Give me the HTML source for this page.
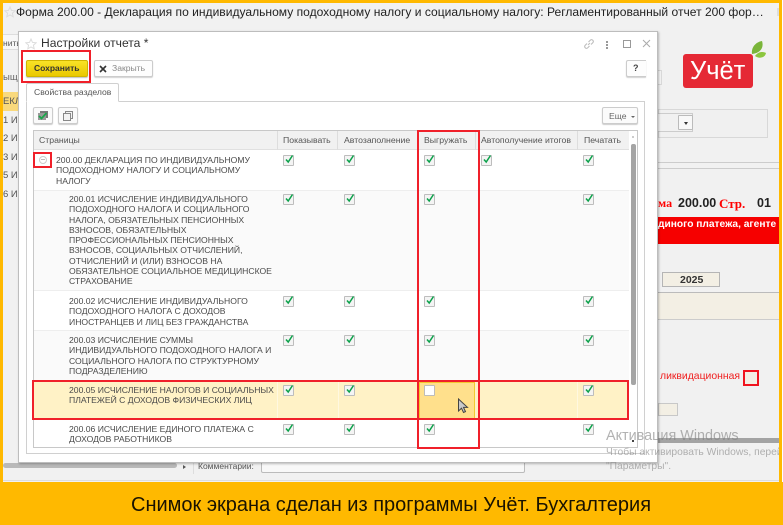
<!DOCTYPE html>
<html><head><meta charset="utf-8">
<style>
html,body{margin:0;padding:0}
body{width:783px;height:525px;position:relative;overflow:hidden;background:#f1f1f1;font-family:"Liberation Sans",sans-serif;color:#444}
.t{position:absolute;white-space:nowrap}
#wrap div,#wrap svg{position:absolute}
#wrap{position:absolute;left:0;top:0;width:783px;height:525px;overflow:hidden;filter:blur(.35px)}
.cell{font-size:8.62px;line-height:10.3px;color:#4a4a4a;white-space:nowrap}
.hd{font-size:8.7px;color:#555;white-space:nowrap;top:135px}
.cb{width:9px;height:9px;background:#f4f4f4;border:1px solid #bdbdbd;border-radius:1px}
.cb svg{left:0;top:-3px;overflow:visible}
.rb{border:2px solid #f0202a;box-sizing:border-box}
</style></head><body>
<div id="wrap">
<!-- window title -->
<svg width="12" height="12" style="left:4px;top:6px" viewBox="0 0 12 12"><path d="M6 1l1.500 3.400 3.700.4-2.800 2.400.8 3.600L6 9l-3.200 1.800.8-3.600L.8 4.800l3.700-.4z" fill="none" stroke="#ddd"/></svg>
<div class="t" style="left:16px;top:4px;font-size:12.07px;line-height:16px;color:#222">Форма 200.00 - Декларация по индивидуальному подоходному налогу и социальному налогу: Регламентированный отчет 200 фор…</div>
<div style="left:777px;top:8px;width:2px;height:8px;background:#ddd"></div>

<!-- background left -->
<div style="left:3px;top:34px;width:15px;height:14px;background:#f7f7f7;border:1px solid #ddd;border-left:0"></div>
<div class="t" style="left:3px;top:38px;font-size:8.5px;color:#555">нить</div>
<div style="left:3px;top:92px;width:15px;height:19px;background:#f9d97c"></div>
<div class="t" style="left:3px;top:72px;font-size:9.500px;color:#666">ыщи</div>
<div class="t" style="left:3px;top:96px;font-size:9.500px;color:#555">ЕКЛ</div>
<div class="t" style="left:3px;top:115px;font-size:9.500px;color:#555">1 ИС</div>
<div class="t" style="left:3px;top:133px;font-size:9.500px;color:#555">2 ИС</div>
<div class="t" style="left:3px;top:152px;font-size:9.500px;color:#555">3 ИС</div>
<div class="t" style="left:3px;top:170px;font-size:9.500px;color:#555">5 ИС</div>
<div class="t" style="left:3px;top:189px;font-size:9.500px;color:#555">6 ИС</div>
<div style="left:3px;top:463px;width:174px;height:5px;background:#b9b9b9;border-radius:3px"></div>
<div style="left:183px;top:465px;width:0;height:0;border:2px solid transparent;border-left:3px solid #555"></div>
<div style="left:193px;top:462px;width:1px;height:12px;background:#ddd"></div>
<div style="left:3px;top:480px;width:776px;height:1px;background:#ddd"></div>
<div class="t" style="left:198px;top:461px;font-size:8.5px;color:#555">Комментарии:</div>
<div style="left:261px;top:460px;width:264px;height:13px;background:#f8f8f8;border:1px solid #bbb;border-radius:2px;box-sizing:border-box"></div>

<!-- background right -->
<div style="left:658px;top:70px;width:4px;height:15px;background:#f4f4f4;border:1px solid #d8d8d8;border-left:0;box-sizing:border-box"></div>
<div style="left:658px;top:109px;width:110px;height:29px;border:1px solid #d8d8d8;background:#f0f0f0;box-sizing:border-box"></div>
<div style="left:658px;top:113px;width:35px;height:19px;background:#f1f1f1;border:1px solid #ccc;border-left:0;box-sizing:border-box"></div>
<div style="left:678px;top:115px;width:15px;height:15px;background:#f8f8f8;border:1px solid #bbb;border-radius:1px;box-sizing:border-box"></div>
<div style="left:684px;top:122px;width:0;height:0;border:2.500px solid transparent;border-top:3px solid #333"></div>
<div style="left:658px;top:162px;width:121px;height:1px;background:#ccc"></div>
<div style="left:658px;top:168px;width:121px;height:1px;background:#ccc"></div>
<div class="t" style="left:658px;top:196px;font:bold 12px 'Liberation Serif',serif;color:#f00">ма</div>
<div class="t" style="left:678px;top:196px;font:bold 12.500px 'Liberation Sans',sans-serif;color:#222">200.00</div>
<div class="t" style="left:719px;top:196px;font:bold 13px 'Liberation Serif',serif;color:#f00">Стр.</div>
<div class="t" style="left:757px;top:196px;font:bold 12.500px 'Liberation Sans',sans-serif;color:#222">01</div>
<div style="left:658px;top:217px;width:121px;height:27px;background:#f60000"></div>
<div class="t" style="left:658px;top:219px;font:bold 10.200px 'Liberation Sans',sans-serif;color:#fff">диного платежа, агенте</div>
<div style="left:662px;top:272px;width:58px;height:15px;background:#f3efe4;border:1px solid #b5b5b5;box-sizing:border-box"></div>
<div class="t" style="left:680px;top:274px;font:bold 10.500px 'Liberation Sans',sans-serif;color:#333">2025</div>
<div style="left:658px;top:292px;width:121px;height:28px;background:#f3efe4;border-top:1px solid #bbb;border-bottom:1px solid #ccc;box-sizing:border-box"></div>
<div class="t" style="left:660px;top:371px;font-size:10.400px;color:#f02020">ликвидационная</div>
<div style="left:743px;top:370px;width:16px;height:16px;background:#f3efe4;border:2px solid #f0141e;box-sizing:border-box"></div>
<div style="left:658px;top:403px;width:20px;height:13px;background:#f3efe4;border:1px solid #c8c8c8;box-sizing:border-box"></div>
<div style="left:658px;top:438px;width:121px;height:5px;background:#a3a3a3"></div>

<!-- dialog -->
<div style="left:18px;top:31px;width:640px;height:432px;background:#fff;border:1px solid #bdbdbd;box-sizing:border-box;box-shadow:1px 1px 2px rgba(0,0,0,.25)"></div>
<svg width="12" height="12" style="left:25px;top:38px" viewBox="0 0 12 12"><path d="M6 1l1.500 3.400 3.700.4-2.800 2.400.8 3.600L6 9l-3.200 1.800.8-3.600L.8 4.800l3.700-.4z" fill="none" stroke="#ddd"/></svg>
<div class="t" style="left:41px;top:35px;font-size:12.100px;line-height:16px;color:#333">Настройки отчета *</div>
<!-- dialog icons -->
<svg width="12" height="12" style="left:583px;top:38px" viewBox="0 0 12 12"><path d="M5 7l2-2M4 5.500L2 7.500a1.800 1.800 0 0 0 2.500 2.500L6.500 8M8 6.500l2-2A1.800 1.800 0 0 0 7.500 2L5.500 4" fill="none" stroke="#bbb"/></svg>
<div style="left:606px;top:41px;width:2px;height:2px;background:#999;box-shadow:0 3px #999,0 6px #999"></div>
<div style="left:623px;top:40px;width:6px;height:6px;border:1px solid #999"></div>
<svg width="9" height="9" style="left:642px;top:39px" viewBox="0 0 9 9"><path d="M1 1l7 7M8 1L1 8" stroke="#aaa" fill="none"/></svg>

<!-- buttons -->
<div style="left:26px;top:60px;width:62px;height:17px;border-radius:2px;background:linear-gradient(#f8e227,#e9c800);border:1px solid #cfb400;box-sizing:border-box;box-shadow:0 1px 1px rgba(0,0,0,.25)"></div>
<div class="t" style="left:34px;top:63px;font:bold 8.500px/11px 'Liberation Sans',sans-serif;color:#333">Сохранить</div>
<div style="left:94px;top:60px;width:59px;height:17px;background:#fdfdfd;border:1px solid #ccc;border-radius:2px;box-sizing:border-box;box-shadow:0 1px 1px rgba(0,0,0,.18)"></div>
<svg width="8" height="8" style="left:99px;top:65px" viewBox="0 0 8 8"><path d="M1 1l6 6M7 1L1 7" stroke="#333" stroke-width="1.600" fill="none"/></svg>
<div class="t" style="left:112px;top:63px;font-size:8.600px;line-height:11px;color:#888">Закрыть</div>
<div class="rb" style="left:21px;top:50px;width:70px;height:33px"></div>
<div style="left:626px;top:60px;width:20px;height:17px;background:#fdfdfd;border:1px solid #ccc;border-right:0;border-radius:2px 0 0 2px;box-sizing:border-box;box-shadow:0 1px 1px rgba(0,0,0,.18)"></div>
<div class="t" style="left:633px;top:63px;font:bold 9px/11px 'Liberation Sans',sans-serif;color:#444">?</div>

<!-- tab + panel -->
<div style="left:26px;top:101px;width:619px;height:353px;border:1px solid #d0d0d0;box-sizing:border-box;background:#fff"></div>
<div style="left:26px;top:83px;width:93px;height:19px;background:#fff;border:1px solid #d0d0d0;border-bottom:1px solid #fff;box-sizing:border-box;border-radius:2px 2px 0 0"></div>
<div class="t" style="left:34px;top:87px;font-size:8.600px;line-height:11px;color:#555">Свойства разделов</div>

<div style="left:33px;top:107px;width:20px;height:17px;background:#fafafa;border:1px solid #ccc;border-radius:2px;box-sizing:border-box;box-shadow:0 1px 1px rgba(0,0,0,.2)"></div>
<svg width="12" height="12" style="left:37px;top:110px" viewBox="0 0 12 12"><rect x="3" y="1" width="8" height="7" fill="#777"/><rect x="1" y="3" width="8" height="7" fill="#9a9a9a"/><path d="M2 6l2.500 2.500L9.500 3" stroke="#1aa64a" stroke-width="1.800" fill="none"/></svg>
<div style="left:58px;top:107px;width:20px;height:17px;background:#fafafa;border:1px solid #ccc;border-radius:2px;box-sizing:border-box;box-shadow:0 1px 1px rgba(0,0,0,.2)"></div>
<svg width="12" height="12" style="left:62px;top:110px" viewBox="0 0 12 12"><rect x="3.500" y="1.500" width="7" height="7" fill="#f3f3f3" stroke="#888"/><rect x="1.500" y="3.500" width="7" height="7" fill="#f3f3f3" stroke="#888"/></svg>
<div style="left:602px;top:107px;width:36px;height:17px;background:#fbfbfb;border:1px solid #ccc;border-radius:2px;box-sizing:border-box;box-shadow:0 1px 1px rgba(0,0,0,.2)"></div>
<div class="t" style="left:609px;top:111px;font-size:8.600px;line-height:11px;color:#666">Еще</div>
<div style="left:631px;top:116px;width:0;height:0;border:2px solid transparent;border-top:2.500px solid #666"></div>

<!-- table -->
<div style="left:33px;top:130px;width:605px;height:318px;border:1px solid #c8c8c8;box-sizing:border-box;background:#fff"></div>
<div style="left:34px;top:131px;width:595px;height:19px;background:#f1f1f1;border-bottom:1px solid #e0e0e0;box-sizing:border-box"></div>
<div style="left:277px;top:131px;width:1px;height:19px;background:#ddd"></div>
<div style="left:337px;top:131px;width:1px;height:19px;background:#ddd"></div>
<div style="left:475px;top:131px;width:1px;height:19px;background:#ddd"></div>
<div style="left:577px;top:131px;width:1px;height:19px;background:#ddd"></div>
<div class="hd t" style="left:39px">Страницы</div>
<div class="hd t" style="left:283px">Показывать</div>
<div class="hd t" style="left:344px">Автозаполнение</div>
<div class="hd t" style="left:424px">Выгружать</div>
<div class="hd t" style="left:481px">Автополучение итогов</div>
<div class="hd t" style="left:584px">Печатать</div>

<!-- row backgrounds -->
<div style="left:34px;top:190px;width:595px;height:101px;background:#fafafa;border-top:1px solid #eee;border-bottom:1px solid #eee;box-sizing:border-box"></div>
<div style="left:34px;top:330px;width:595px;height:51px;background:#fafafa;border-top:1px solid #eee;box-sizing:border-box"></div>
<div style="left:34px;top:381px;width:595px;height:38px;background:#fff2c6"></div>
<div style="left:277px;top:381px;width:1px;height:38px;background:#fff8e0"></div>
<div style="left:338px;top:381px;width:1px;height:38px;background:#fff8e0"></div>
<div style="left:577px;top:381px;width:1px;height:38px;background:#fff8e0"></div>
<div style="left:419px;top:382px;width:56px;height:37px;background:#ffe08c;border:1px solid #f3c92f;box-sizing:border-box"></div>

<div style="left:39px;top:156px;width:6px;height:6px;border:1px solid #ccc;border-radius:50%"></div>
<div style="left:41px;top:159px;width:4px;height:1px;background:#bbb"></div>
<div class="rb" style="left:33px;top:152px;width:19px;height:16px"></div>

<div class="cell" style="left:56px;top:155px">200.00 ДЕКЛАРАЦИЯ ПО ИНДИВИДУАЛЬНОМУ<br>ПОДОХОДНОМУ НАЛОГУ И СОЦИАЛЬНОМУ<br>НАЛОГУ</div>
<div class="cell" style="left:69px;top:194px">200.01 ИСЧИСЛЕНИЕ ИНДИВИДУАЛЬНОГО<br>ПОДОХОДНОГО НАЛОГА И СОЦИАЛЬНОГО<br>НАЛОГА, ОБЯЗАТЕЛЬНЫХ ПЕНСИОННЫХ<br>ВЗНОСОВ, ОБЯЗАТЕЛЬНЫХ<br>ПРОФЕССИОНАЛЬНЫХ ПЕНСИОННЫХ<br>ВЗНОСОВ, СОЦИАЛЬНЫХ ОТЧИСЛЕНИЙ,<br>ОТЧИСЛЕНИЙ И (ИЛИ) ВЗНОСОВ НА<br>ОБЯЗАТЕЛЬНОЕ СОЦИАЛЬНОЕ МЕДИЦИНСКОЕ<br>СТРАХОВАНИЕ</div>
<div class="cell" style="left:69px;top:296px">200.02 ИСЧИСЛЕНИЕ ИНДИВИДУАЛЬНОГО<br>ПОДОХОДНОГО НАЛОГА С ДОХОДОВ<br>ИНОСТРАНЦЕВ И ЛИЦ БЕЗ ГРАЖДАНСТВА</div>
<div class="cell" style="left:69px;top:335px">200.03 ИСЧИСЛЕНИЕ СУММЫ<br>ИНДИВИДУАЛЬНОГО ПОДОХОДНОГО НАЛОГА И<br>СОЦИАЛЬНОГО НАЛОГА ПО СТРУКТУРНОМУ<br>ПОДРАЗДЕЛЕНИЮ</div>
<div class="cell" style="left:69px;top:385px">200.05 ИСЧИСЛЕНИЕ НАЛОГОВ И СОЦИАЛЬНЫХ<br>ПЛАТЕЖЕЙ С ДОХОДОВ ФИЗИЧЕСКИХ ЛИЦ</div>
<div class="cell" style="left:69px;top:424px">200.06 ИСЧИСЛЕНИЕ ЕДИНОГО ПЛАТЕЖА С<br>ДОХОДОВ РАБОТНИКОВ</div>

<!-- checkboxes -->
<div class="cb" style="left:283px;top:155px"><svg width="10" height="12" viewBox="0 0 10 12"><path d="M2 6.500l2.200 2.500L8.500 2.500" stroke="#0ba14a" stroke-width="1.500" fill="none"/></svg></div>
<div class="cb" style="left:344px;top:155px"><svg width="10" height="12" viewBox="0 0 10 12"><path d="M2 6.500l2.200 2.500L8.500 2.500" stroke="#0ba14a" stroke-width="1.500" fill="none"/></svg></div>
<div class="cb" style="left:424px;top:155px"><svg width="10" height="12" viewBox="0 0 10 12"><path d="M2 6.500l2.200 2.500L8.500 2.500" stroke="#0ba14a" stroke-width="1.500" fill="none"/></svg></div>
<div class="cb" style="left:481px;top:155px"><svg width="10" height="12" viewBox="0 0 10 12"><path d="M2 6.500l2.200 2.500L8.500 2.500" stroke="#0ba14a" stroke-width="1.500" fill="none"/></svg></div>
<div class="cb" style="left:583px;top:155px"><svg width="10" height="12" viewBox="0 0 10 12"><path d="M2 6.500l2.200 2.500L8.500 2.500" stroke="#0ba14a" stroke-width="1.500" fill="none"/></svg></div>

<div class="cb" style="left:283px;top:194px"><svg width="10" height="12" viewBox="0 0 10 12"><path d="M2 6.500l2.200 2.500L8.500 2.500" stroke="#0ba14a" stroke-width="1.500" fill="none"/></svg></div>
<div class="cb" style="left:344px;top:194px"><svg width="10" height="12" viewBox="0 0 10 12"><path d="M2 6.500l2.200 2.500L8.500 2.500" stroke="#0ba14a" stroke-width="1.500" fill="none"/></svg></div>
<div class="cb" style="left:424px;top:194px"><svg width="10" height="12" viewBox="0 0 10 12"><path d="M2 6.500l2.200 2.500L8.500 2.500" stroke="#0ba14a" stroke-width="1.500" fill="none"/></svg></div>
<div class="cb" style="left:583px;top:194px"><svg width="10" height="12" viewBox="0 0 10 12"><path d="M2 6.500l2.200 2.500L8.500 2.500" stroke="#0ba14a" stroke-width="1.500" fill="none"/></svg></div>

<div class="cb" style="left:283px;top:296px"><svg width="10" height="12" viewBox="0 0 10 12"><path d="M2 6.500l2.200 2.500L8.500 2.500" stroke="#0ba14a" stroke-width="1.500" fill="none"/></svg></div>
<div class="cb" style="left:344px;top:296px"><svg width="10" height="12" viewBox="0 0 10 12"><path d="M2 6.500l2.200 2.500L8.500 2.500" stroke="#0ba14a" stroke-width="1.500" fill="none"/></svg></div>
<div class="cb" style="left:424px;top:296px"><svg width="10" height="12" viewBox="0 0 10 12"><path d="M2 6.500l2.200 2.500L8.500 2.500" stroke="#0ba14a" stroke-width="1.500" fill="none"/></svg></div>
<div class="cb" style="left:583px;top:296px"><svg width="10" height="12" viewBox="0 0 10 12"><path d="M2 6.500l2.200 2.500L8.500 2.500" stroke="#0ba14a" stroke-width="1.500" fill="none"/></svg></div>

<div class="cb" style="left:283px;top:335px"><svg width="10" height="12" viewBox="0 0 10 12"><path d="M2 6.500l2.200 2.500L8.500 2.500" stroke="#0ba14a" stroke-width="1.500" fill="none"/></svg></div>
<div class="cb" style="left:344px;top:335px"><svg width="10" height="12" viewBox="0 0 10 12"><path d="M2 6.500l2.200 2.500L8.500 2.500" stroke="#0ba14a" stroke-width="1.500" fill="none"/></svg></div>
<div class="cb" style="left:424px;top:335px"><svg width="10" height="12" viewBox="0 0 10 12"><path d="M2 6.500l2.200 2.500L8.500 2.500" stroke="#0ba14a" stroke-width="1.500" fill="none"/></svg></div>
<div class="cb" style="left:583px;top:335px"><svg width="10" height="12" viewBox="0 0 10 12"><path d="M2 6.500l2.200 2.500L8.500 2.500" stroke="#0ba14a" stroke-width="1.500" fill="none"/></svg></div>

<div class="cb" style="left:283px;top:385px"><svg width="10" height="12" viewBox="0 0 10 12"><path d="M2 6.500l2.200 2.500L8.500 2.500" stroke="#0ba14a" stroke-width="1.500" fill="none"/></svg></div>
<div class="cb" style="left:344px;top:385px"><svg width="10" height="12" viewBox="0 0 10 12"><path d="M2 6.500l2.200 2.500L8.500 2.500" stroke="#0ba14a" stroke-width="1.500" fill="none"/></svg></div>
<div class="cb" style="left:424px;top:385px;background:#fff"></div>
<div class="cb" style="left:583px;top:385px"><svg width="10" height="12" viewBox="0 0 10 12"><path d="M2 6.500l2.200 2.500L8.500 2.500" stroke="#0ba14a" stroke-width="1.500" fill="none"/></svg></div>

<div class="cb" style="left:283px;top:424px"><svg width="10" height="12" viewBox="0 0 10 12"><path d="M2 6.500l2.200 2.500L8.500 2.500" stroke="#0ba14a" stroke-width="1.500" fill="none"/></svg></div>
<div class="cb" style="left:344px;top:424px"><svg width="10" height="12" viewBox="0 0 10 12"><path d="M2 6.500l2.200 2.500L8.500 2.500" stroke="#0ba14a" stroke-width="1.500" fill="none"/></svg></div>
<div class="cb" style="left:424px;top:424px"><svg width="10" height="12" viewBox="0 0 10 12"><path d="M2 6.500l2.200 2.500L8.500 2.500" stroke="#0ba14a" stroke-width="1.500" fill="none"/></svg></div>
<div class="cb" style="left:583px;top:424px"><svg width="10" height="12" viewBox="0 0 10 12"><path d="M2 6.500l2.200 2.500L8.500 2.500" stroke="#0ba14a" stroke-width="1.500" fill="none"/></svg></div>

<!-- scrollbar -->
<div style="left:631px;top:144px;width:5px;height:241px;background:#a5a5a5;border-radius:2px"></div>
<div style="left:632px;top:136px;width:2px;height:2px;background:#ccc"></div>
<div style="left:632px;top:440px;width:2px;height:2px;background:#444"></div>

<!-- cursor -->
<svg width="12" height="16" style="left:457px;top:398px" viewBox="0 0 12 16"><path d="M1.500 1v12l3-2.800 2 4.300 2-.9-2-4.200h4z" fill="#c9c9c9" stroke="#444" stroke-width="1"/></svg>

<!-- red outlines -->
<div class="rb" style="left:417px;top:130px;width:63px;height:319px"></div>
<div class="rb" style="left:32px;top:380px;width:597px;height:40px"></div>

<!-- activation -->
<div class="t" style="left:606px;top:428px;font-size:14.400px;color:rgba(130,130,130,.62)">Активация Windows</div>
<div class="t" style="left:606px;top:447px;width:173px;overflow:hidden;font-size:10.300px;color:rgba(130,130,130,.6)">Чтобы активировать Windows, перей</div>
<div class="t" style="left:606px;top:461px;font-size:10.300px;color:rgba(130,130,130,.6)">"Параметры".</div>

<!-- logo -->
<div style="left:683px;top:54px;width:70px;height:34px;background:#e52935;border-radius:3px"></div>
<div class="t" style="left:690px;top:54px;font-size:25.500px;line-height:34px;color:#fff">Учёт</div>
<svg width="16" height="20" style="left:751px;top:40px" viewBox="0 0 16 20"><path d="M1 14C0 7 5 2 11 1c2 6-1 12-10 13z" fill="#7ab53a"/><path d="M4 16c3-4 7-5 11-3-1 5-7 6-11 3z" fill="#8cc63f"/></svg>

<!-- frame -->
<div style="left:0;top:0;width:783px;height:3px;background:#ffb900"></div>
<div style="left:0;top:0;width:3px;height:525px;background:#ffb900"></div>
<div style="left:782px;top:0;width:1px;height:485px;background:#fff"></div>
<div style="left:779px;top:0;width:3px;height:525px;background:#ffb900"></div>
<div style="left:0;top:482px;width:783px;height:43px;background:#ffb900"></div>

<!-- caption -->
<div class="t" style="left:131px;top:493px;font-size:20px;line-height:24px;color:#1a1300">Снимок экрана сделан из программы Учёт. Бухгалтерия</div>
</div>
</body></html>
